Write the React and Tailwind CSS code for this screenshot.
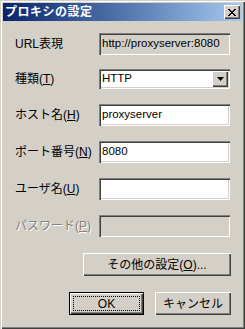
import React from "react";

const font = { fontFamily: '"Liberation Sans", "Noto Sans CJK JP", sans-serif' };

function U({ children }) {
  return <span className="underline underline-offset-1">{children}</span>;
}

function Label({ children, disabled }) {
  return (
    <div
      className={
        "w-[96px] shrink-0 whitespace-nowrap pl-[12px] text-[12px] leading-none " +
        (disabled ? "text-[#808080] [text-shadow:1px_1px_0_#ffffff]" : "text-black")
      }
    >
      {children}
    </div>
  );
}

function Field({ children, gray, h = "h-[22px]" }) {
  return (
    <div
      className={
        "w-[131px] " + h +
        " flex items-center pl-[3px] text-[11.5px] leading-none text-black whitespace-nowrap " +
        (gray ? "bg-[#d4d0c8] " : "bg-white ") +
        "shadow-[inset_1px_1px_#808080,inset_2px_2px_#404040,inset_-1px_-1px_#ffffff,inset_-2px_-2px_#d4d0c8]"
      }
    >
      {children}
    </div>
  );
}

const raised =
  "shadow-[inset_1px_1px_#ffffff,inset_-1px_-1px_#404040,inset_-2px_-2px_#808080]";

export default function App() {
  return (
    <div
      style={font}
      className="w-[245px] h-[329px] bg-[#d4d0c8] p-[3px] flex flex-col shadow-[inset_1px_1px_#d4d0c8,inset_2px_2px_#ffffff,inset_-1px_-1px_#404040,inset_-2px_-2px_#808080]"
    >
      <div className="h-[18px] flex items-center justify-between bg-linear-to-r from-[#0a246a] to-[#a6caf0] pl-[2px] pr-[2px]">
        <span className="text-white font-bold text-[12px] leading-none tracking-[0.5px]">
          プロキシの設定
        </span>
        <div className={"w-[16px] h-[14px] bg-[#d4d0c8] flex items-center justify-center " + raised}>
          <svg width="8" height="7" viewBox="0 0 8 7">
            <path d="M0 0h2v1h1v1h2V1h1V0h2v1H7v1H6v1H5v1h1v1h1v1h1v1H6V6H5V5H3v1H2v1H0V6h1V5h1V4h1V3H2V2H1V1H0z" fill="#000" />
          </svg>
        </div>
      </div>

      <div className="flex flex-col pt-[12px]">
        <div className="flex items-center">
          <Label>URL表現</Label>
          <Field gray>http://proxyserver:8080</Field>
        </div>

        <div className="flex items-center mt-[14px]">
          <Label>
            種類(<U>T</U>)
          </Label>
          <div className="w-[131px] h-[20px] bg-white flex items-center justify-between pl-[3px] pr-[2px] text-[11.5px] leading-none shadow-[inset_1px_1px_#808080,inset_2px_2px_#404040,inset_-1px_-1px_#ffffff,inset_-2px_-2px_#d4d0c8]">
            <span>HTTP</span>
            <div className={"w-[16px] h-[16px] bg-[#d4d0c8] flex items-center justify-center " + raised}>
              <svg width="7" height="4" viewBox="0 0 7 4">
                <path d="M0 0h7L3.5 4z" fill="#000" />
              </svg>
            </div>
          </div>
        </div>

        <div className="flex items-center mt-[15px]">
          <Label>
            ホスト名(<U>H</U>)
          </Label>
          <Field>proxyserver</Field>
        </div>

        <div className="flex items-center mt-[15px]">
          <Label>
            ポート番号(<U>N</U>)
          </Label>
          <Field>8080</Field>
        </div>

        <div className="flex items-center mt-[15px]">
          <Label>
            ユーザ名(<U>U</U>)
          </Label>
          <Field></Field>
        </div>

        <div className="flex items-center mt-[15px]">
          <Label disabled>
            パスワード(<U>P</U>)
          </Label>
          <Field gray></Field>
        </div>

        <div className="flex justify-end pr-[11px] mt-[16px]">
          <div className={"w-[148px] h-[23px] flex items-center justify-center text-[12px] leading-none " + raised}>
            その他の設定(<U>O</U>)...
          </div>
        </div>

        <div className="flex justify-end gap-[11px] pr-[11px] mt-[16px]">
          <div className="w-[75px] h-[23px] border border-black">
            <div className={"w-full h-full flex p-[3px] " + raised}>
              <div className="w-full h-full border border-dotted border-black flex items-center justify-center text-[12px] leading-none">
                OK
              </div>
            </div>
          </div>
          <div className={"w-[76px] h-[23px] flex items-center justify-center text-[12px] leading-none " + raised}>
            キャンセル
          </div>
        </div>
      </div>
    </div>
  );
}
